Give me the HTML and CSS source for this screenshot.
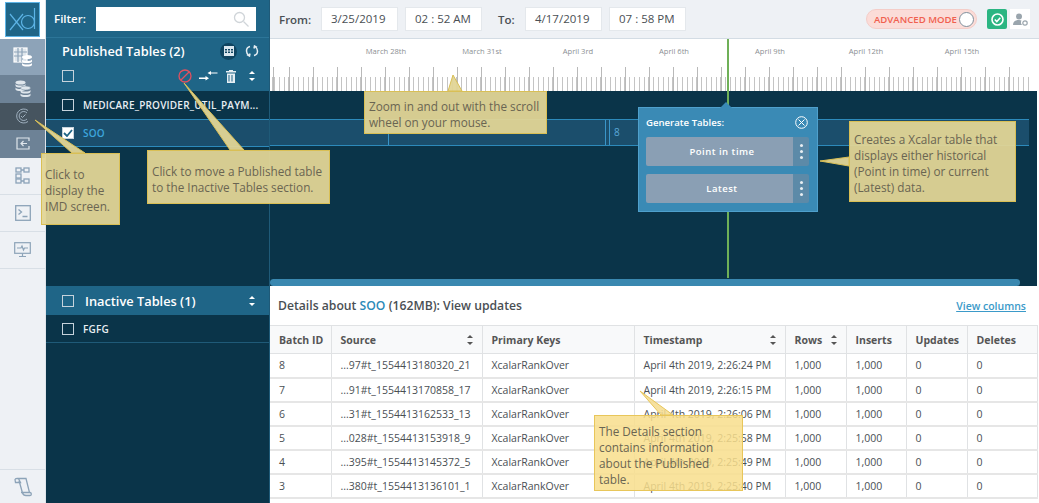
FILE: index.html
```html
<!DOCTYPE html>
<html>
<head>
    <title>Xcalar Design - IMD</title>
    <link rel="stylesheet" href="styles.css">
</head>
<body>
<div class="app">
    <nav class="rail">
        <div class="logo">
            <svg width="33" height="33" viewBox="0 0 33 33" fill="none" stroke="#5db4e6" stroke-width="1.2">
                <path d="M4 11l13 16M17 11L4 27"/>
                <circle cx="22" cy="19" r="6.500"/>
                <path d="M28.500 5v21"/>
            </svg>
        </div>
        <div class="rail-item rail-active">
            <svg width="20" height="22" viewBox="0 0 20 22" fill="none" stroke="#fff" stroke-width="1.2">
                <rect x="1" y="2" width="13" height="14" fill="#dfe6ec"/>
                <path d="M1 6h13M1 10h13M5 2v14M9 2v14" stroke="#8da3b8"/>
                <ellipse cx="14" cy="11" rx="5" ry="2" fill="#fff" stroke="none"/>
                <path d="M9 13.500c1 2 9 2 10 0v2c-1 2-9 2-10 0zM9 17c1 2 9 2 10 0v2c-1 2-9 2-10 0z" fill="#fff" stroke="none"/>
            </svg>
        </div>
        <div class="rail-sub">
            <svg width="16" height="17" viewBox="0 0 16 17" fill="#dfe6ec">
                <ellipse cx="5.500" cy="2.500" rx="5" ry="2"/><path d="M.5 4c1 2 9 2 10 0v2c-1 2-9 2-10 0zM.5 7.500c1 2 9 2 10 0v2c-1 2-9 2-10 0z"/>
                <ellipse cx="10.500" cy="8" rx="5" ry="2" stroke="#6f8699" stroke-width=".5"/><path d="M5.500 10c1 2 9 2 10 0v2c-1 2-9 2-10 0zM5.500 13.500c1 2 9 2 10 0v2c-1 2-9 2-10 0z"/>
            </svg>
        </div>
        <div class="rail-sub rail-sub-on">
            <svg width="16" height="16" viewBox="0 0 16 16" fill="none" stroke="#9fb0bf" stroke-width="1">
                <path d="M13 2.500A7 7 0 1 0 13 13.500"/><path d="M12 5A4.500 4.500 0 1 0 12 11"/><path d="M6 8l1.500 1.500L10.500 6.500"/>
            </svg>
        </div>
        <div class="rail-sub">
            <svg width="14" height="13" viewBox="0 0 14 13" fill="none" stroke="#dfe6ec" stroke-width="1.200">
                <path d="M13 4V1H1v11h12V9"/><path d="M11 6.500H5M7.500 4L5 6.500 7.500 9"/>
            </svg>
        </div>
        <div class="rail-item">
            <svg width="15" height="17" viewBox="0 0 15 17" fill="none" stroke="#8ca3b8" stroke-width="1.300">
                <rect x="1" y="1" width="5" height="4"/><rect x="9" y="1" width="5" height="4"/><rect x="1" y="7" width="5" height="4"/><rect x="1" y="12" width="5" height="4"/><rect x="9" y="12" width="5" height="4"/><path d="M6 3h3M6 14h3"/>
            </svg>
        </div>
        <div class="rail-item">
            <svg width="16" height="16" viewBox="0 0 16 16" fill="none" stroke="#8ca3b8" stroke-width="1.300">
                <rect x=".7" y=".7" width="14.600" height="14.600"/><path d="M3.500 4.500l3 2.500-3 2.500M7.500 11.500h5"/>
            </svg>
        </div>
        <div class="rail-item">
            <svg width="17" height="16" viewBox="0 0 17 16" fill="none" stroke="#8ca3b8" stroke-width="1.200">
                <rect x=".7" y=".7" width="15.600" height="10.600"/><path d="M3 6h4l1-2 1.500 4 1-2h3.500M8.500 11.500V14M5 14.500h7" />
            </svg>
        </div>
        <div class="rail-foot">
            <svg width="18" height="20" viewBox="0 0 18 20" fill="none" stroke="#8ca3b8" stroke-width="1.300">
                <path d="M1 2.500c1-1.500 3-1.500 4 0l1.500 3H1.500zM2.500 1.500H12l3.500 14H7M5 3.500l3.500 12.500c.8 2.500 3 2.500 3.500 2.500h4c1.500 0 2-2.500 0-3h-1"/>
            </svg>
        </div>
    </nav>

    <aside class="tables">
        <div class="filter-row">
            <span class="filter-label">Filter:</span>
            <div class="filter-box">
                <svg width="16" height="16" viewBox="0 0 16 16" fill="none" stroke="#d0d5d9" stroke-width="1.300">
                    <circle cx="6.500" cy="6.500" r="5"/><path d="M10.500 10.500l5 5"/>
                </svg>
            </div>
        </div>
        <div class="pub-head">
            <div class="pub-title-row">
                <span class="pub-title">Published Tables (2)</span>
                <span class="round-icon">
                    <svg width="10" height="10" viewBox="0 0 10 10" fill="#d9e6ee"><path d="M0 0h10v10H0zM1 3v1.500h2V3zm3 0v1.500h2V3zm3 0v1.500h2V3zM1 5.500V7h2V5.500zm3 0V7h2V5.500zm3 0V7h2V5.500z" fill-rule="evenodd"/></svg>
                </span>
                <svg class="refresh" width="14" height="12" viewBox="0 0 14 12" fill="none" stroke="#e6eef3" stroke-width="1.500">
                    <path d="M5 1.500C2.500 2 1.500 4 1.500 6S2.500 9.500 4 10.500M9 10.500c2.500-.5 3.500-2.500 3.500-4.500S11.500 2.500 10 1.500M2 9.500l2.500 1.500L5 8.500M12 2.500L9.500 1 9 3.500"/>
                </svg>
            </div>
            <div class="pub-tools">
                <span class="check"></span>
                <svg class="tool-ban" width="14" height="14" viewBox="0 0 14 14" fill="none" stroke="#e2505f" stroke-width="1.300">
                    <circle cx="7" cy="7" r="6"/><path d="M3 11l8-8"/>
                </svg>
                <svg class="tool-move" width="19" height="12" viewBox="0 0 19 12" fill="#fff">
                    <path d="M18.500 2.500H12V1L8.500 3 12 5V3.500h6.500zM0 7.500v1.500h6.500v1.500L10 8.200 6.500 6v1.500z"/>
                </svg>
                <svg class="tool-trash" width="10" height="13" viewBox="0 0 10 13" fill="#e6eef3">
                    <path d="M3 0h4v1h3v1.500H0V1h3zM1 3.500h8V13H1zm1.500 1.500v6.500h1V5zm3 0v6.500h1V5z" fill-rule="evenodd"/>
                </svg>
                <span class="sort-arrows"><i class="up"></i><i class="down"></i></span>
            </div>
        </div>
        <div class="table-row">
            <span class="check"></span>
            <span class="table-name">MEDICARE_PROVIDER_UTIL_PAYM...</span>
        </div>
        <div class="table-row table-row-on">
            <span class="check check-on">
                <svg width="10" height="8" viewBox="0 0 10 8" fill="none" stroke="#1f6587" stroke-width="1.800"><path d="M1 4l3 3 5-6"/></svg>
            </span>
            <span class="table-name">SOO</span>
        </div>
        <div class="tables-fill"></div>
        <div class="inactive-head">
            <span class="check"></span>
            <span class="inactive-title">Inactive Tables (1)</span>
            <span class="sort-arrows"><i class="up"></i><i class="down"></i></span>
        </div>
        <div class="table-row table-row-line">
            <span class="check"></span>
            <span class="table-name">FGFG</span>
        </div>
        <div class="tables-end"></div>
    </aside>

    <main class="main">
        <header class="topbar">
            <span class="top-label">From:</span>
            <span class="top-field">3/25/2019</span>
            <span class="top-field">02 : 52 AM</span>
            <span class="top-label top-label-to">To:</span>
            <span class="top-field">4/17/2019</span>
            <span class="top-field">07 : 58 PM</span>
            <span class="mode-pill">ADVANCED MODE<i class="mode-knob"></i></span>
            <span class="status-ok">
                <svg width="13" height="13" viewBox="0 0 13 13" fill="none" stroke="#fff" stroke-width="1.600"><circle cx="6.500" cy="6.500" r="5.500"/><path d="M3.800 6.500l2 2 3.500-3.800"/></svg>
            </span>
            <span class="user-btn">
                <svg width="15" height="13" viewBox="0 0 15 13" fill="#9aa5ad"><circle cx="6" cy="3.500" r="3"/><path d="M0 12c0-3 2-5 6-5 1 0 2 .2 2.500.5C7.500 9 8 11 9 12z"/><circle cx="12" cy="10" r="2.200" fill="none" stroke="#9aa5ad" stroke-width="1.200"/></svg>
            </span>
        </header>

        <section class="timeline">
            <div class="ruler">
                <div class="ruler-dates">
                    <span>March 28th</span><span>March 31st</span><span>April 3rd</span><span>April 6th</span>
                    <span>April 9th</span><span>April 12th</span><span>April 15th</span>
                </div>
                <div class="ruler-ticks"></div>
            </div>
            <div class="lanes">
                <div class="lane-top"></div>
                <div class="lane">
                    <i class="lane-mark lane-mark-a"></i>
                    <i class="lane-mark lane-mark-b"></i>
                    <i class="lane-mark lane-mark-c"></i>
                    <span class="lane-num">8</span>
                </div>
                <div class="lane-fill"></div>
                <div class="scrollbar"></div>
            </div>
            <i class="now-line"></i>
            <div class="generate">
                <i class="generate-tip"></i>
                <div class="generate-head">
                    <span>Generate Tables:</span>
                    <svg width="13" height="13" viewBox="0 0 13 13" fill="none" stroke="#fff" stroke-width="1"><circle cx="6.500" cy="6.500" r="5.800"/><path d="M3.500 3.500l6 6M9.500 3.500l-6 6"/></svg>
                </div>
                <div class="generate-btn">
                    <span class="generate-name">Point in time</span>
                    <span class="kebab"><i></i><i></i><i></i></span>
                </div>
                <div class="generate-btn">
                    <span class="generate-name">Latest</span>
                    <span class="kebab"><i></i><i></i><i></i></span>
                </div>
            </div>
        </section>

        <section class="details">
            <div class="details-head">
                <span>Details about <b>SOO</b> (162MB): View updates</span>
                <a class="view-cols" href="#">View columns</a>
            </div>
            <table class="updates">
                <colgroup>
                    <col class="c-batch"><col class="c-source"><col class="c-keys"><col class="c-time"><col class="c-rows"><col class="c-ins"><col class="c-upd"><col class="c-del">
                </colgroup>
                <tr>
                    <th>Batch ID</th>
                    <th><div class="th-sort">Source<span class="sort-arrows dark"><i class="up"></i><i class="down"></i></span></div></th>
                    <th>Primary Keys</th>
                    <th><div class="th-sort">Timestamp<span class="sort-arrows dark"><i class="up"></i><i class="down"></i></span></div></th>
                    <th><div class="th-sort">Rows<span class="sort-arrows dark"><i class="up"></i><i class="down"></i></span></div></th>
                    <th>Inserts</th>
                    <th>Updates</th>
                    <th>Deletes</th>
                </tr>
                <tr><td>8</td><td>...97#t_1554413180320_21</td><td>XcalarRankOver</td><td>April 4th 2019, 2:26:24 PM</td><td>1,000</td><td>1,000</td><td>0</td><td>0</td></tr>
                <tr><td>7</td><td>...91#t_1554413170858_17</td><td>XcalarRankOver</td><td>April 4th 2019, 2:26:15 PM</td><td>1,000</td><td>1,000</td><td>0</td><td>0</td></tr>
                <tr><td>6</td><td>...31#t_1554413162533_13</td><td>XcalarRankOver</td><td>April 4th 2019, 2:26:06 PM</td><td>1,000</td><td>1,000</td><td>0</td><td>0</td></tr>
                <tr><td>5</td><td>...028#t_1554413153918_9</td><td>XcalarRankOver</td><td>April 4th 2019, 2:25:58 PM</td><td>1,000</td><td>1,000</td><td>0</td><td>0</td></tr>
                <tr><td>4</td><td>...395#t_1554413145372_5</td><td>XcalarRankOver</td><td>April 4th 2019, 2:25:49 PM</td><td>1,000</td><td>1,000</td><td>0</td><td>0</td></tr>
                <tr><td>3</td><td>...380#t_1554413136101_1</td><td>XcalarRankOver</td><td>April 4th 2019, 2:25:40 PM</td><td>1,000</td><td>1,000</td><td>0</td><td>0</td></tr>
            </table>
        </section>
    </main>

    <!-- callouts drawn over the app -->
    <svg class="pointers" width="1039" height="503" viewBox="0 0 1039 503">
        <g fill="#e2d596" fill-opacity=".95" stroke="#d9bf55" stroke-width="1">
            <path d="M35 120L85 153H72z"/>
            <path d="M184 83L244 150H230z"/>
            <path d="M453 75L462 91H448z"/>
            <path d="M820 161L849 157V166z"/>
        </g>
        <path d="M640 391L673 415H661z" fill="#f5dc8e" fill-opacity=".85" stroke="#e8c65a"/>
    </svg>
    <div class="note note-imd">Click to display the IMD screen.</div>
    <div class="note note-move">Click to move a Published table to the Inactive Tables section.</div>
    <div class="note note-zoom">Zoom in and out with the scroll wheel on your mouse.</div>
    <div class="note note-gen">Creates a Xcalar table that displays either historical (Point in time) or current (Latest) data.</div>
    <div class="note note-details">The Details section contains information about the Published table.</div>
</div>
</body>
</html>
```
FILE: styles.css
```css
* {
    box-sizing: border-box;
}

html, body {
    margin: 0;
    height: 100%;
    overflow: hidden;
}

body {
    font-family: "Open Sans", "Liberation Sans", sans-serif;
    color: #4a4f54;
}

.app {
    position: relative;
    display: flex;
    width: 1039px;
    height: 503px;
    overflow: hidden;
    background-color: #fff;
}

/* left rail */
.rail {
    display: flex;
    flex-direction: column;
    flex: 0 0 46px;
    background-color: #eef1f5;
    border-right: 1px solid #dfe4ea;
}

.logo {
    display: flex;
    align-items: center;
    justify-content: center;
    height: 39px;
    background-color: #fff;
}

.logo svg {
    background-color: #1f6587;
    outline: 1px solid #5db4e6;
}

.rail-item {
    display: flex;
    align-items: center;
    justify-content: center;
    height: 37px;
    border-bottom: 1px solid #d8dfe6;
}

.rail-active {
    height: 36px;
    background-color: #8da3b8;
    border-bottom: none;
}

.rail-sub {
    display: flex;
    align-items: center;
    justify-content: center;
    height: 27.500px;
    background-color: #6d8296;
}

.rail-sub-on {
    background-color: #46545f;
}

.rail-foot {
    display: flex;
    align-items: center;
    justify-content: center;
    margin-top: auto;
    height: 34px;
    border-top: 1px solid #d8dfe6;
}

/* tables panel */
.tables {
    display: flex;
    flex-direction: column;
    flex: 0 0 224px;
    background-color: #0a3449;
    color: #fff;
    border-right: 1px solid #1f5a78;
}

.filter-row {
    display: flex;
    align-items: center;
    height: 38px;
    padding-left: 8px;
    background-color: #1f6587;
    border-bottom: 1px solid #2c7598;
}

.filter-label {
    width: 42px;
    font-size: 11.500px;
    font-weight: 600;
}

.filter-box {
    display: flex;
    align-items: center;
    justify-content: flex-end;
    width: 160px;
    height: 24px;
    padding-right: 7px;
    background-color: #fff;
}

.pub-head {
    height: 53px;
    padding: 1px 10px 0 16px;
    background-color: #1f6587;
}

.pub-title-row {
    display: flex;
    align-items: center;
    height: 24px;
}

.pub-title {
    flex: 1;
    font-size: 12.800px;
    font-weight: 600;
}

.round-icon {
    display: flex;
    align-items: center;
    justify-content: center;
    width: 17px;
    height: 17px;
    margin-right: 8px;
    border-radius: 50%;
    background-color: #0f4460;
}

.pub-tools {
    display: flex;
    align-items: center;
    height: 24px;
    margin-top: 1px;
    padding-right: 4px;
}

.check {
    display: flex;
    align-items: center;
    justify-content: center;
    flex: 0 0 12px;
    width: 12px;
    height: 12px;
    border: 1px solid #c6d3dc;
}

.check-on {
    background-color: #fff;
}

.tool-ban {
    margin-left: 104px;
}

.tool-move {
    margin-left: 7px;
}

.tool-trash {
    margin-left: 8px;
}

.sort-arrows {
    display: inline-flex;
    flex-direction: column;
    gap: 4px;
    margin-left: auto;
    margin-right: 0;
}

.sort-arrows i {
    display: block;
    width: 0;
    height: 0;
    border-left: 3px solid transparent;
    border-right: 3px solid transparent;
}

.sort-arrows .up {
    border-bottom: 3px solid #fff;
}

.sort-arrows .down {
    border-top: 3px solid #fff;
}

.sort-arrows.dark .up {
    border-bottom-color: #555;
}

.sort-arrows.dark .down {
    border-top-color: #555;
}

.table-row {
    display: flex;
    align-items: center;
    gap: 9px;
    height: 29px;
    padding-left: 16px;
    font-size: 10px;
    font-weight: 600;
    letter-spacing: .2px;
    color: #e8eef2;
    border-bottom: 1px solid #2d8abb;
}

.table-row-on {
    height: 27px;
    background-color: #1b4e6c;
    color: #3da6dc;
}

.table-row-line {
    height: 28px;
    border-bottom-color: #1f5a78;
}

.tables-fill {
    height: 139px;
}

.inactive-head {
    display: flex;
    align-items: center;
    height: 29px;
    padding: 0 14px 0 16px;
    background-color: #1f6587;
}

.inactive-title {
    margin-left: 11px;
    font-size: 12.800px;
    font-weight: 600;
}

.tables-end {
    flex: 1;
}

/* right side */
.main {
    position: relative;
    display: flex;
    flex-direction: column;
    flex: 1;
    min-width: 0;
}

.topbar {
    display: flex;
    align-items: center;
    height: 39px;
    padding: 0 9px;
    background-color: #eef1f5;
    border-bottom: 1px solid #d3dce4;
    font-size: 11.500px;
}

.top-label {
    width: 42px;
    font-weight: 600;
}

.top-label-to {
    width: 27px;
    margin-left: 9px;
}

.top-field {
    width: 77px;
    height: 24px;
    margin-right: 7px;
    line-height: 22px;
    padding-left: 9px;
    background-color: #fff;
    border: 1px solid #e4e8ec;
}

.mode-pill {
    display: flex;
    align-items: center;
    justify-content: space-between;
    width: 111px;
    height: 20px;
    margin-left: auto;
    padding: 0 2px 0 7px;
    border-radius: 10px;
    background-color: #fbdcd8;
    border: 1px solid #f4cdc8;
    color: #f0604f;
    font-size: 9.600px;
    font-weight: 600;
    white-space: nowrap;
}

.mode-knob {
    width: 15px;
    height: 15px;
    border-radius: 50%;
    background-color: #fff;
    border: 1px solid #7f8f9c;
}

.status-ok {
    display: flex;
    align-items: center;
    justify-content: center;
    width: 20px;
    height: 20px;
    margin-left: 10px;
    border-radius: 2px;
    background-color: #2bb582;
}

.user-btn {
    display: flex;
    align-items: center;
    justify-content: center;
    width: 20px;
    height: 20px;
    margin-left: 3px;
    background-color: #fff;
}

.timeline {
    position: relative;
    width: 767px;
    height: 247px;
}

.ruler {
    height: 52px;
    background-color: #fff;
}

.ruler-dates {
    display: flex;
    height: 28px;
    padding: 7px 0 0 68px;
}

.ruler-dates span {
    flex: 0 0 96px;
    text-align: center;
    font-size: 7.600px;
    color: #8b8f93;
}

.ruler-ticks {
    width: 760px;
    height: 24px;
    background-image:
        repeating-linear-gradient(90deg, #b9b9b9 0, #b9b9b9 1px, transparent 1px, transparent 24px),
        repeating-linear-gradient(90deg, #c4c4c4 0, #c4c4c4 1px, transparent 1px, transparent 4.800px);
    background-position: 19px 0, 4px 10px;
    background-repeat: repeat-x;
}

.lanes {
    display: flex;
    flex-direction: column;
    height: 195px;
    background-color: #0a3449;
}

.lane-top {
    height: 28px;
}

.lane {
    position: relative;
    height: 27px;
    margin-right: 8px;
    background-color: #1b4e6c;
    border-top: 1px solid #2d8abb;
    border-bottom: 1px solid #2d8abb;
}

.lane-mark {
    position: absolute;
    top: 0;
    bottom: 0;
    width: 1px;
    background-color: #3a95c8;
}

.lane-mark-a {
    left: 118px;
}

.lane-mark-b {
    left: 335px;
}

.lane-mark-c {
    left: 339px;
}

.lane-num {
    position: absolute;
    left: 344px;
    top: 5px;
    font-size: 10px;
    color: #5aa8d8;
}

.lane-fill {
    flex: 1;
}

.scrollbar {
    width: 750px;
    height: 7px;
    border-radius: 4px;
    background-color: #3a88b0;
}

.now-line {
    position: absolute;
    left: 457px;
    top: 0;
    width: 2px;
    height: 239px;
    background-color: #6fb058;
}

.generate {
    position: absolute;
    left: 368px;
    top: 68px;
    width: 180px;
    height: 105px;
    padding: 0 8px 0 7px;
    background-color: #3a8ab5;
    border: 1px solid #4fa0cc;
}

.generate-tip {
    position: absolute;
    left: 81px;
    top: -6px;
    width: 0;
    height: 0;
    border-left: 6px solid transparent;
    border-right: 6px solid transparent;
    border-bottom: 6px solid #3a8ab5;
}

.generate-head {
    display: flex;
    align-items: center;
    justify-content: space-between;
    height: 29px;
    padding-right: 1px;
    font-size: 9.600px;
    font-weight: 600;
    color: #fff;
}

.generate-btn {
    display: flex;
    height: 29px;
    margin-bottom: 8px;
    border-radius: 2px;
    overflow: hidden;
    color: #fff;
    font-size: 9.500px;
    font-weight: 600;
    letter-spacing: .5px;
}

.generate-name {
    flex: 1;
    padding-left: 5px;
    line-height: 29px;
    text-align: center;
    background-color: #8a9fb4;
}

.kebab {
    display: flex;
    flex-direction: column;
    align-items: center;
    justify-content: center;
    gap: 3px;
    width: 16px;
    background-color: #5c8aa8;
}

.kebab i {
    width: 3px;
    height: 3px;
    border-radius: 50%;
    background-color: #e8eef2;
}

/* details */
.details {
    flex: 1;
    background-color: #fff;
}

.details-head {
    display: flex;
    align-items: center;
    justify-content: space-between;
    height: 39px;
    padding: 0 13px 0 8px;
    font-size: 12.200px;
    font-weight: 600;
}

.details-head b {
    color: #2b8ab8;
    font-weight: 600;
}

.view-cols {
    font-size: 10.500px;
    color: #3b9ac9;
}

.updates {
    width: 767px;
    table-layout: fixed;
    border-collapse: collapse;
    font-size: 10.500px;
}

.c-batch { width: 61px; }
.c-source { width: 151px; }
.c-keys { width: 152px; }
.c-time { width: 151px; }
.c-rows { width: 61px; }
.c-ins { width: 60px; }
.c-upd { width: 61px; }
.c-del { width: 70px; }

.updates th {
    height: 28px;
    padding: 0 9px;
    text-align: left;
    font-weight: 700;
    background-color: #f8f9fa;
    border: 1px solid #e0e2e4;
    border-left: none;
    color: #555;
    white-space: nowrap;
}

.updates td {
    height: 24px;
    padding: 0 9px;
    border-bottom: 2px solid #e6e6e6;
    border-right: 1px solid #e0e2e4;
    white-space: nowrap;
}

.th-sort {
    display: flex;
    align-items: center;
    justify-content: space-between;
}

/* callouts */
.pointers {
    position: absolute;
    left: 0;
    top: 0;
    pointer-events: none;
}

.note {
    position: absolute;
    padding: 6px 4px;
    font-size: 11.750px;
    line-height: 16px;
    color: #6a6552;
    background-color: rgba(226, 213, 150, .95);
    border: 1px solid #d9bf55;
}

.note-imd {
    left: 41px;
    top: 153px;
    width: 79px;
    height: 72px;
    padding: 12px 3px 0;
}

.note-move {
    left: 147px;
    top: 150px;
    width: 183px;
    height: 54px;
    padding-top: 12px;
}

.note-zoom {
    left: 364px;
    top: 91px;
    width: 183px;
    height: 43px;
}

.note-gen {
    left: 849px;
    top: 121px;
    width: 167px;
    height: 81px;
    padding-top: 9px;
}

.note-details {
    left: 594px;
    top: 415px;
    width: 149px;
    height: 76px;
    background-color: rgba(248, 222, 140, .85);
    border-color: #e8c65a;
    padding-top: 7px;
}
```
